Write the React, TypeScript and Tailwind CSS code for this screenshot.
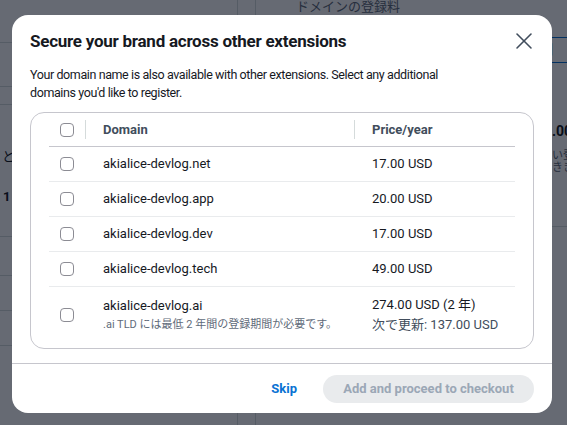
import { X } from "lucide-react"

const domains = [
  { name: "akialice-devlog.net", price: "17.00 USD" },
  { name: "akialice-devlog.app", price: "20.00 USD" },
  { name: "akialice-devlog.dev", price: "17.00 USD" },
  { name: "akialice-devlog.tech", price: "49.00 USD" },
]

function Checkbox() {
  return <span className="block size-[14px] rounded-[4px] border border-[#8c8c94] bg-white" />
}

function Backdrop() {
  return (
    <div className="absolute inset-0 bg-white">
      {/* page behind the dialog */}
      <div className="flex h-full">
        <div className="flex w-[238px] flex-col border-r border-[#d5dbdb]">
          <div className="h-[43px] border-b border-[#d5dbdb]" />
          <div className="h-[44px] border-b border-[#d5dbdb]" />
          <div className="h-[18px] border-b border-[#d5dbdb]" />
          <div className="pt-[42px] pl-[2px] text-[13px] text-[#16191f]">と(</div>
          <div className="pt-[20px] pl-[3px] text-[13px] font-bold text-[#16191f]">1</div>
          <div className="mt-[30px] h-[40px] border-t border-b border-[#d5dbdb]" />
          <div className="h-[35px] border-b border-[#d5dbdb]" />
          <div className="h-[35px] border-b border-[#d5dbdb]" />
        </div>
        <div className="w-[18px] border-r border-[#d5dbdb]" />
        <div className="flex flex-1 flex-col overflow-hidden whitespace-nowrap">
          <div className="-mt-[3px] pl-[40px] text-[13px] text-[#5f6b7a]">ドメインの登録料</div>
          <div className="mt-[20px] ml-auto flex h-[26px] w-[30px] items-center border border-r-0 border-[#0972d3] pl-[2px] text-[13px] text-[#0972d3]">
            削
          </div>
          <div className="mt-[58px] pl-[296px] text-[14px] font-bold text-[#16191f]">.00</div>
          <div className="mt-[8px] pl-[296px] text-[11px] leading-[12px] text-[#5f6b7a]">
            い登
            <br />
            きき
          </div>
          <div className="mt-[52px] h-px bg-[#d5dbdb]" />
        </div>
      </div>
      <div className="absolute inset-0 bg-[#000716]/60" />
    </div>
  )
}

export default function App() {
  return (
    <div
      className="relative h-[425px] w-[567px] overflow-hidden"
      style={{ fontFamily: "Roboto, 'Noto Sans CJK JP', sans-serif" }}
    >
      <Backdrop />

      <div className="absolute left-[12px] top-[15px] w-[540px] rounded-[16px] bg-white text-[#16191f]">
        {/* Header */}
        <div className="flex items-start justify-between px-[18px] pt-[12px]">
          <h2 className="text-[17px] font-bold leading-[28px] tracking-[-0.25px]">
            Secure your brand across other extensions
          </h2>
          <button className="-mr-[4px] text-[#414d5c]">
            <X className="size-[28px]" strokeWidth={1.3} />
          </button>
        </div>

        {/* Body */}
        <div className="px-[18px] pt-[11px] pb-[14px]">
          <p className="max-w-[430px] text-[12.5px] leading-[18px] tracking-[-0.4px]">
            Your domain name is also available with other extensions. Select any additional domains you'd like to
            register.
          </p>

          <div className="mt-[10px] rounded-[14px] border border-[#c6c6cd] px-[18px] pb-[9px]">
            <div className="flex h-[34px] items-center border-b border-[#c6c6cd] text-[13px] font-bold text-[#414d5c]">
              <div className="flex w-[36px] items-center pl-[11px]">
                <Checkbox />
              </div>
              <div className="flex flex-1 items-center border-l border-[#d5dbdb] pl-[17px]">Domain</div>
              <div className="flex w-[161px] items-center border-l border-[#d5dbdb] pl-[17px]">Price/year</div>
            </div>

            {domains.map((d) => (
              <div key={d.name} className="flex h-[35px] items-center border-b border-[#e9ebed] text-[13px]">
                <div className="w-[36px] pl-[11px]">
                  <Checkbox />
                </div>
                <div className="flex-1 pl-[18px]">{d.name}</div>
                <div className="w-[161px] pl-[18px]">{d.price}</div>
              </div>
            ))}

            <div className="flex items-center pt-[8px] pb-[4px] text-[13px]">
              <div className="w-[36px] pl-[11px]">
                <Checkbox />
              </div>
              <div className="flex-1 pl-[18px]">
                <div className="leading-[20px]">akialice-devlog.ai</div>
                <div className="text-[11px] leading-[18px] text-[#5f6b7a]">.ai TLD には最低 2 年間の登録期間が必要です。</div>
              </div>
              <div className="w-[161px] pl-[18px] leading-[20px]">
                <div>274.00 USD (2 年)</div>
                <div className="text-[#414d5c]">次で更新: 137.00 USD</div>
              </div>
            </div>
          </div>
        </div>

        {/* Footer */}
        <div className="flex items-center justify-end gap-[26px] border-t border-[#c6c6cd] px-[18px] pt-[11px] pb-[10px]">
          <button className="text-[13px] font-bold text-[#0972d3]">Skip</button>
          <button className="h-[28px] w-[211px] rounded-full bg-[#e9ebed] text-[13px] font-bold text-[#9ba7b6]">
            Add and proceed to checkout
          </button>
        </div>
      </div>
    </div>
  )
}
